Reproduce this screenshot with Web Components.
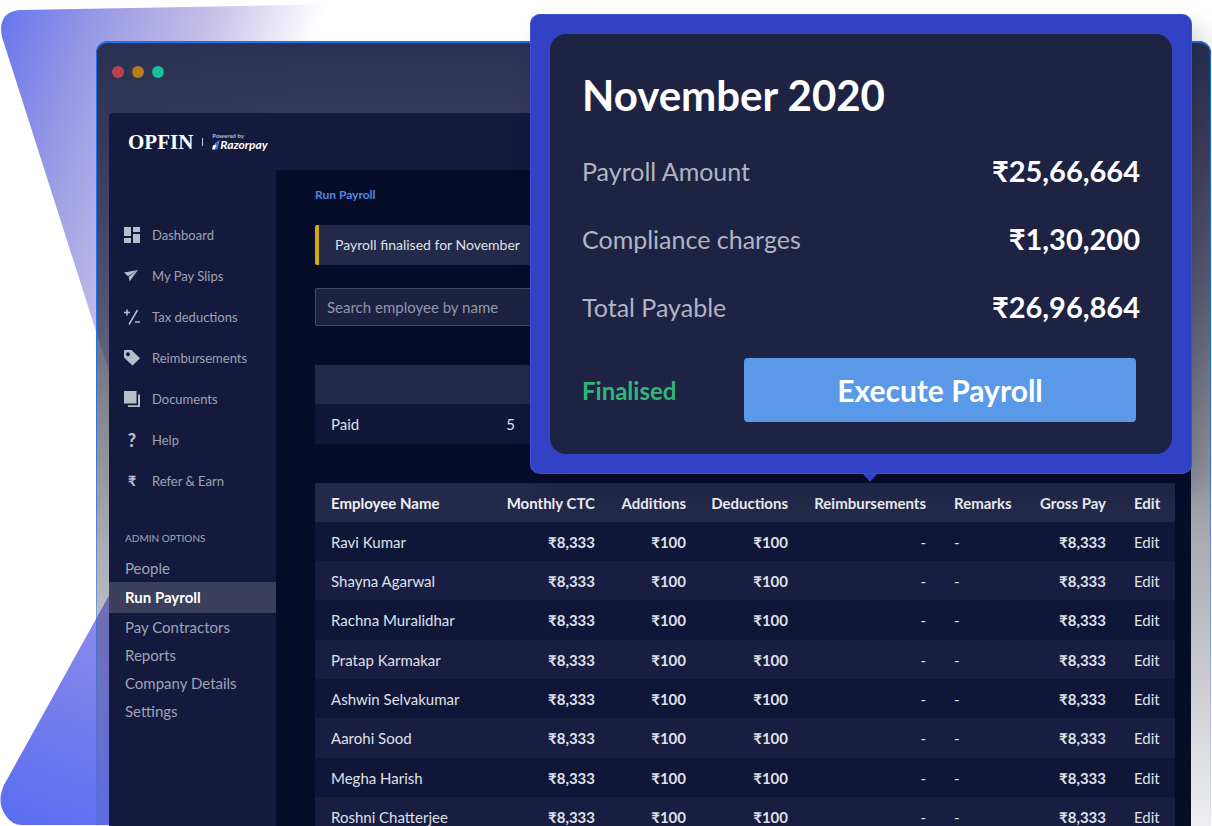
<!DOCTYPE html>
<html lang="en">
<head>
<meta charset="utf-8">
<title>Opfin - Run Payroll</title>
<style>
  body {
    margin: 0;
    background: #fff;
    font-family: Lato, "Open Sans", "Noto Sans", sans-serif;
    font-size: 15px;
  }
</style>
</head>
<body>
<hero-stage>
  <browser-window>
    <brand-logo slot="header"></brand-logo>
    <side-nav slot="sidebar">
      <nav-item icon="dashboard">Dashboard</nav-item>
      <nav-item icon="send">My Pay Slips</nav-item>
      <nav-item icon="tax">Tax deductions</nav-item>
      <nav-item icon="tag">Reimbursements</nav-item>
      <nav-item icon="docs">Documents</nav-item>
      <nav-item icon="?">Help</nav-item>
      <nav-item icon="₹">Refer &amp; Earn</nav-item>
      <sub-item slot="admin">People</sub-item>
      <sub-item slot="admin" active>Run Payroll</sub-item>
      <sub-item slot="admin">Pay Contractors</sub-item>
      <sub-item slot="admin">Reports</sub-item>
      <sub-item slot="admin">Company Details</sub-item>
      <sub-item slot="admin">Settings</sub-item>
    </side-nav>
    <payroll-page></payroll-page>
  </browser-window>
  <payroll-popup slot="popup" heading="November 2020">
    <amount-row label="Payroll Amount">₹25,66,664</amount-row>
    <amount-row label="Compliance charges">₹1,30,200</amount-row>
    <amount-row label="Total Payable">₹26,96,864</amount-row>
    <span slot="status">Finalised</span>
    <span slot="action">Execute Payroll</span>
  </payroll-popup>
</hero-stage>

<script>
// attach an open shadow root and fill it from a template
function render(el, html) {
  const template = document.createElement("template");
  template.innerHTML = html;
  el.attachShadow({ mode: "open" }).appendChild(template.content.cloneNode(true));
}

class HeroStage extends HTMLElement {
  constructor() {
    super();
    render(this, `
      <style>
        :host {
          display: block;
          position: relative;
          height: 100vh;
          overflow: hidden;
        }
        .shapes {
          position: absolute; /* decoration behind the window */
          top: 0;
          left: 0;
        }
        .content {
          position: relative;
          padding: 41px 1px 0 96px;
        }
        ::slotted(payroll-popup) {
          position: absolute; /* floats over the window */
          top: 14px;
          right: 20px;
        }
      </style>
      <svg class="shapes" width="420" height="826" viewBox="0 0 420 826" aria-hidden="true">
        <defs>
          <linearGradient id="top" gradientUnits="userSpaceOnUse" x1="0" y1="20" x2="290" y2="115">
            <stop offset="0" stop-color="#6876ec"/>
            <stop offset=".3" stop-color="#9899e5"/>
            <stop offset=".65" stop-color="#c5bfe7"/>
            <stop offset="1" stop-color="#fff"/>
          </linearGradient>
          <linearGradient id="bottom" gradientUnits="userSpaceOnUse" x1="20" y1="826" x2="110" y2="590">
            <stop offset="0" stop-color="#5a6df1"/>
            <stop offset="1" stop-color="#908fe8"/>
          </linearGradient>
        </defs>
        <path fill="url(#top)" d="M20 10 L400 3 L400 400 L118 400 L2 37 Q-3 12 20 10Z"/>
        <path fill="#fff" d="M118 400H400V420H118Z"/>
        <path fill="url(#bottom)" d="M112 590 L4 785 Q-4 803 6 816 Q12 825 22 825 H400 V590Z"/>
      </svg>
      <div class="content"><slot></slot></div>
      <slot name="popup"></slot>
    `);
  }
}

class BrowserWindow extends HTMLElement {
  constructor() {
    super();
    render(this, `
      <style>
        :host {
          display: block;
          position: relative;
          box-sizing: border-box;
          min-height: calc(100vh - 41px);
          padding: 1px 20px 0 13px;
          border-radius: 12px 12px 0 0;
          background: linear-gradient(
            #293052 0,
            rgba(46, 49, 80, 0.94) 90px,
            rgba(50, 53, 80, 0.8) 240px,
            rgba(50, 53, 72, 0.6) 370px,
            rgba(50, 53, 72, 0.42) 500px,
            rgba(50, 53, 72, 0.24) 650px,
            rgba(50, 53, 72, 0.08) 785px
          );
        }
        :host::before {
          content: "";
          position: absolute; /* outline that fades out downwards */
          inset: 0;
          border: solid #2172ea;
          border-width: 2px 1px 0 1px;
          border-radius: 12px 12px 0 0;
          -webkit-mask-image: linear-gradient(#000 30%, transparent 85%);
          mask-image: linear-gradient(#000 30%, transparent 85%);
          pointer-events: none;
        }
        .bar {
          display: flex;
          align-items: center;
          gap: 8px;
          height: 60px;
          padding: 0 3px 11px;
        }
        .dot {
          width: 12px;
          height: 12px;
          border-radius: 50%;
        }
        .app {
          overflow: hidden;
          border-radius: 4px 0 0 0;
          background: #141a3d;
        }
        header {
          display: flex;
          align-items: center;
          height: 57px;
          padding: 0 19px;
        }
        .body {
          display: flex;
          min-height: 820px;
        }
        ::slotted(payroll-page) { flex: 1; min-width: 0; }
      </style>
      <div class="bar">
        <span class="dot" style="background:#bb414d"></span>
        <span class="dot" style="background:#b97b1c"></span>
        <span class="dot" style="background:#15c299"></span>
      </div>
      <div class="app">
        <header><slot name="header"></slot></header>
        <div class="body">
          <slot name="sidebar"></slot>
          <slot></slot>
        </div>
      </div>
    `);
  }
}

class BrandLogo extends HTMLElement {
  constructor() {
    super();
    render(this, `
      <style>
        :host {
          display: flex;
          align-items: center;
          gap: 9px;
          color: #fff;
        }
        .name {
          font: bold 21px/24px "Liberation Serif", serif;
        }
        .bar {
          width: 1px;
          height: 8px;
          background: #c9cbd6;
        }
        .by {
          font-size: 6px;
          line-height: 7px;
          font-weight: 700;
          color: #b9bccb;
        }
        .maker {
          display: flex;
          align-items: center;
          font-size: 12px;
          line-height: 12px;
          font-weight: 700;
          font-style: italic;
        }
      </style>
      <span class="name">OPFIN</span>
      <span class="bar"></span>
      <div>
        <div class="by">Powered by</div>
        <div class="maker">
          <svg width="8" height="10" viewBox="0 0 8 10" aria-hidden="true">
            <path fill="#fff" d="M1 5.600 4.600 4 3 9.500H0Z"/>
            <path fill="#3b82f0" d="M7.800 0 5.200 9.500H3.200L4.900 3.300 2.300 4.900 2.900 2.900Z"/>
          </svg>
          <span>Razorpay</span>
        </div>
      </div>
    `);
  }
}

class SideNav extends HTMLElement {
  constructor() {
    super();
    render(this, `
      <style>
        :host {
          display: block;
          flex: 0 0 167px;
          padding-top: 44px;
        }
        nav {
          display: flex;
          flex-direction: column;
        }
        h2 {
          margin: 0;
          padding: 29px 16px 8px;
          font-size: 10px;
          line-height: 16px;
          font-weight: 400;
          color: #a5a8b7;
        }
      </style>
      <nav><slot></slot></nav>
      <h2>ADMIN OPTIONS</h2>
      <nav><slot name="admin"></slot></nav>
    `);
  }
}

const icons = {
  dashboard: '<path d="M0 0h7v9H0zM9 0h7v5H9zM0 11h7v5H0zM9 7h7v9H9z"/>',
  send: '<path d="M0 4.500 14 2 4 8.200ZM14 2 5.500 13.500 4.800 8.800Z"/>',
  tax: '<path d="M0 3.500h6M3 .5v6M13.500 1 5 15.500M11 13h5" fill="none" stroke="currentColor" stroke-width="1.500"/>',
  tag: '<path fill-rule="evenodd" d="M1 0h6.500L16 8.300 8.500 15.500 0 7.500V1Q0 0 1 0ZM4 2.300a2 2 0 1 0 .01 0Z"/>',
  docs: '<path d="M0 0h12.500v12.500H0zM14 3.500h2V16H4v-1.700h10z"/>'
};

class NavItem extends HTMLElement {
  constructor() {
    super();
    const icon = this.getAttribute("icon");
    const mark = icons[icon]
      ? `<svg width="16" height="16" viewBox="0 0 16 16" fill="currentColor" aria-hidden="true">${icons[icon]}</svg>`
      : `<b>${icon}</b>`;
    render(this, `
      <style>
        :host { display: block; }
        a {
          display: flex;
          align-items: center;
          gap: 12px;
          height: 41px;
          padding: 0 15px;
          font-size: 13px;
          line-height: 20px;
          color: #9fa3b3;
          text-decoration: none;
        }
        .icon {
          display: flex;
          justify-content: center;
          width: 16px;
          color: #b9bcca;
        }
        b {
          font-size: ${icon === "?" ? 18 : 14}px;
          font-weight: 900;
        }
      </style>
      <a href="#"><span class="icon">${mark}</span><slot></slot></a>
    `);
  }
}

class SubItem extends HTMLElement {
  constructor() {
    super();
    render(this, `
      <style>
        :host { display: block; }
        a {
          display: block;
          padding: 0 16px;
          line-height: 28px;
          color: #9fa3b3;
          text-decoration: none;
        }
        :host([active]) a {
          line-height: 31px;
          background: #3c3f5c;
          color: #fff;
          font-weight: 700;
        }
      </style>
      <a href="#"><slot></slot></a>
    `);
  }
}

class PayrollPage extends HTMLElement {
  constructor() {
    super();
    const names = ["Ravi Kumar", "Shayna Agarwal", "Rachna Muralidhar", "Pratap Karmakar",
      "Ashwin Selvakumar", "Aarohi Sood", "Megha Harish", "Roshni Chatterjee"];
    const rows = names.map(name => `
      <tr>
        <td>${name}</td>
        <td class="num">₹8,333</td>
        <td class="num">₹100</td>
        <td class="num">₹100</td>
        <td class="none">-</td>
        <td>-</td>
        <td class="num">₹8,333</td>
        <td><a href="#">Edit</a></td>
      </tr>`).join("");
    render(this, `
      <style>
        :host {
          display: block;
          padding: 15px 16px 0 39px;
          background: #070c29;
          color: #dfe0e8;
        }
        .crumb {
          display: block;
          font-size: 12px;
          line-height: 20px;
          font-weight: 700;
          color: #5585df;
          text-decoration: none;
        }
        .notice {
          margin-top: 20px;
          padding: 0 16px;
          border-left: 4px solid #d3a816;
          border-radius: 2px;
          background: #232949;
          font-size: 14px;
          line-height: 40px;
        }
        input {
          display: block;
          box-sizing: border-box;
          width: 100%;
          height: 38px;
          margin-top: 23px;
          padding: 0 11px;
          border: 1px solid #444965;
          border-radius: 2px;
          background: #1e2241;
          color: #dfe0e8;
          font: inherit;
        }
        input::placeholder { color: #9295a8; }
        table {
          width: 100%;
          margin-top: 39px;
          border-collapse: collapse;
          table-layout: fixed;
        }
        th, td {
          height: 39px;
          padding: 0 14px;
          text-align: left;
          white-space: nowrap;
        }
        th:first-child, td:first-child { padding-left: 16px; }
        th {
          background: #232949;
          color: #eeeff4;
          font-weight: 700;
        }
        .num, .none {
          padding-left: 4px;
          text-align: right;
        }
        td.num { font-weight: 700; }
        tbody tr { background: #101638; }
        tbody tr:nth-child(even) { background: #181d41; }
        .summary td { height: 40px; }
        .staff tr:nth-child(3n) td { height: 40px; }
        td a { color: inherit; text-decoration: none; }
      </style>
      <a class="crumb" href="#">Run Payroll</a>
      <div class="notice">Payroll finalised for November</div>
      <input type="text" placeholder="Search employee by name" aria-label="Search employee by name">
      <table class="summary">
        <colgroup><col style="width:112px"><col style="width:102px"><col></colgroup>
        <thead><tr><th></th><th></th><th></th></tr></thead>
        <tbody><tr><td>Paid</td><td class="none">5</td><td></td></tr></tbody>
      </table>
      <table class="staff">
        <colgroup>
          <col>
          <col style="width:112px">
          <col style="width:91px">
          <col style="width:102px">
          <col style="width:138px">
          <col style="width:86px">
          <col style="width:94px">
          <col style="width:55px">
        </colgroup>
        <thead>
          <tr>
            <th>Employee Name</th>
            <th class="num">Monthly CTC</th>
            <th class="num">Additions</th>
            <th class="num">Deductions</th>
            <th class="num">Reimbursements</th>
            <th>Remarks</th>
            <th class="num">Gross Pay</th>
            <th>Edit</th>
          </tr>
        </thead>
        <tbody>${rows}</tbody>
      </table>
    `);
  }
}

class AmountRow extends HTMLElement {
  constructor() {
    super();
    render(this, `
      <style>
        :host {
          display: flex;
          align-items: center;
          justify-content: space-between;
          height: 68px;
          line-height: 32px;
        }
        .label {
          font-size: 25px;
          color: #b1b4c1;
        }
        .value {
          font-size: 29px;
          font-weight: 700;
          color: #fff;
        }
      </style>
      <span class="label">${this.getAttribute("label")}</span>
      <span class="value"><slot></slot></span>
    `);
  }
}

class PayrollPopup extends HTMLElement {
  constructor() {
    super();
    render(this, `
      <style>
        :host {
          display: block;
          box-sizing: border-box;
          width: 662px;
          padding: 20px;
          border-radius: 10px;
          background: #3142c4;
          box-shadow: inset 0 0 0 1px rgba(80, 98, 222, 0.5), 12px 16px 28px rgba(8, 12, 40, 0.2);
        }
        :host::after {
          content: "";
          position: absolute; /* pointer to the table */
          top: 100%;
          left: 333px;
          border: 7px solid transparent;
          border-top: 8px solid #3142c4;
          border-bottom: 0;
        }
        section {
          padding: 33px 32px 32px;
          border-radius: 16px;
          background: #1e2344;
        }
        h1 {
          margin: 0 0 14px;
          font-size: 42px;
          line-height: 56px;
          font-weight: 700;
          color: #fff;
        }
        .foot {
          display: flex;
          align-items: center;
          justify-content: space-between;
          padding: 17px 4px 0 0;
        }
        .status {
          font-size: 24px;
          font-weight: 700;
          color: #31b679;
        }
        button {
          width: 392px;
          height: 64px;
          padding: 0;
          border: 0;
          border-radius: 4px;
          background: #5a98e8;
          color: #fff;
          font: inherit;
          font-size: 30px;
          font-weight: 700;
          cursor: pointer;
        }
      </style>
      <section>
        <h1>${this.getAttribute("heading")}</h1>
        <slot></slot>
        <div class="foot">
          <span class="status"><slot name="status"></slot></span>
          <button type="button"><slot name="action"></slot></button>
        </div>
      </section>
    `);
  }
}

customElements.define("hero-stage", HeroStage);
customElements.define("browser-window", BrowserWindow);
customElements.define("brand-logo", BrandLogo);
customElements.define("side-nav", SideNav);
customElements.define("nav-item", NavItem);
customElements.define("sub-item", SubItem);
customElements.define("payroll-page", PayrollPage);
customElements.define("amount-row", AmountRow);
customElements.define("payroll-popup", PayrollPopup);
</script>
</body>
</html>
